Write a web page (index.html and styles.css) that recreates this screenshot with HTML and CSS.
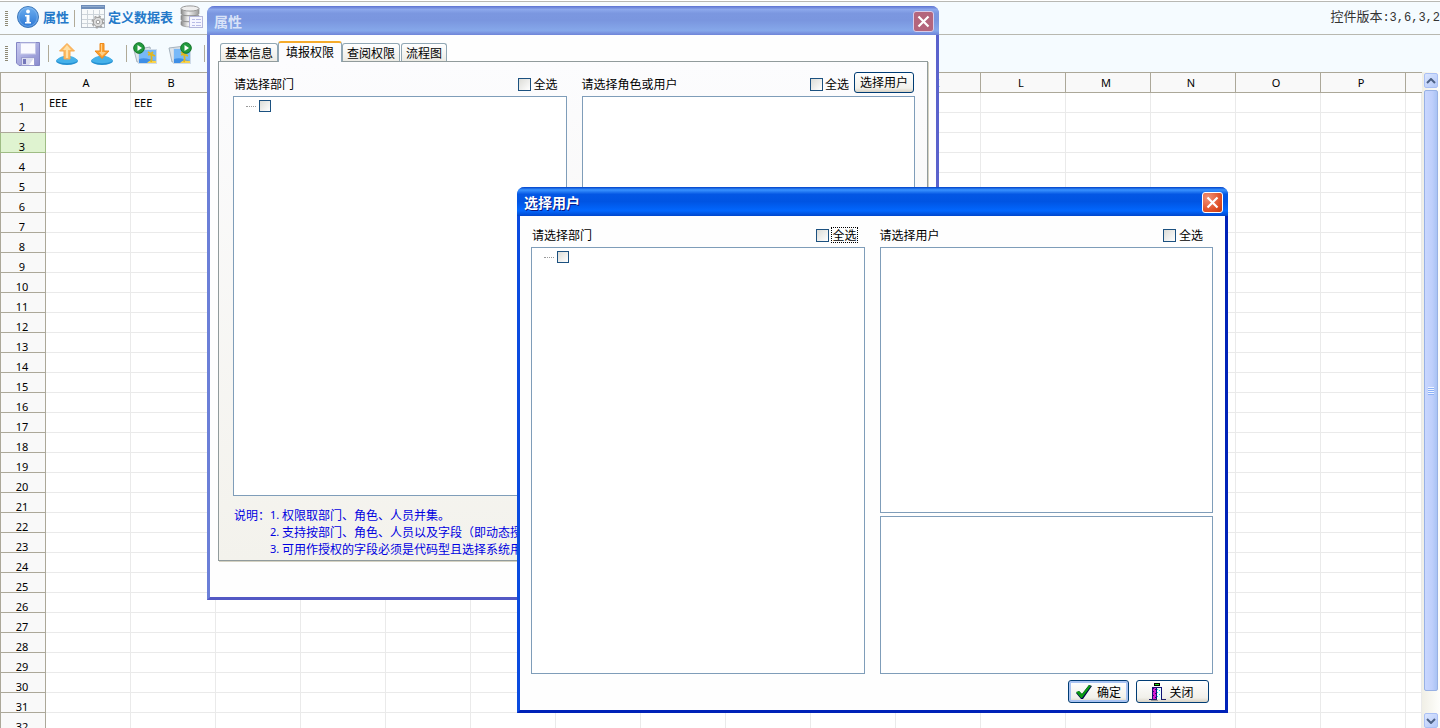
FILE: index.html
```html
<!DOCTYPE html>
<html lang="zh-CN">
<head>
<meta charset="utf-8">
<title>属性</title>
<link rel="stylesheet" href="styles.css">
</head>
<body>
<header class="toolbar toolbar-main">
  <span class="grip"></span>
  <button class="tool" type="button">
    <svg width="24" height="24" viewBox="0 0 24 24"><defs><linearGradient id="info" x1="0" y1="0" x2="0" y2="1"><stop offset="0" stop-color="#6fb0f0"/><stop offset="1" stop-color="#2a76d4"/></linearGradient></defs><circle cx="12" cy="12" r="10.5" fill="url(#info)" stroke="#3f78b8"/><circle cx="12" cy="12" r="9.3" fill="none" stroke="#8fc0f2" stroke-width=".6"/><circle cx="12" cy="6.500" r="1.900" fill="#fff"/><path d="M9 10h4.500v7H15v1.500H9V17h1.500v-5.500H9z" fill="#fff"/></svg>
    <span>属性</span>
  </button>
  <span class="sep"></span>
  <button class="tool" type="button">
    <svg width="24" height="24" viewBox="0 0 24 24"><rect x=".5" y=".5" width="23" height="22" fill="#f8fafb" stroke="#b4bcc6"/><path d="M0 0h24v4H0z" fill="#6d8cb8"/><path d="M1 1h22v1H1z" fill="#8fabd0"/><path d="M1 9.500h22M1 14.500h22M1 18.500h22M6.500 5v17M12.500 5v17M18.500 5v17" stroke="#cdd4da"/><circle cx="17" cy="17" r="4.700" fill="#dcdcdc" stroke="#999" stroke-width="1"/><circle cx="17" cy="17" r="5.700" fill="none" stroke="#a5a5a5" stroke-width="1.600" stroke-dasharray="2.200 2.270"/><circle cx="17" cy="17" r="1.800" fill="#fff" stroke="#999"/></svg>
    <span>定义数据表</span>
  </button>
  <button class="tool tool-data" type="button" aria-label="数据">
    <svg width="24" height="24" viewBox="0 0 24 24"><defs><linearGradient id="db"><stop offset="0" stop-color="#888"/><stop offset=".4" stop-color="#f4f4f4"/><stop offset="1" stop-color="#999"/></linearGradient></defs><path d="M1 3.500v5c0 3.200 18 3.200 18 0v-5zM1 10.500v4c0 3.200 18 3.200 18 0v-4zM1 16.500v3c0 3.200 18 3.200 18 0v-3z" fill="url(#db)" stroke="#888" stroke-width=".6"/><ellipse cx="10" cy="3.500" rx="9" ry="2.600" fill="#eee" stroke="#999"/><rect x="9.500" y="11.500" width="13" height="11" fill="#f5f6ff" stroke="#b3b6da"/><path d="M12 14.500h3m1 0h5m-9 3h3m1 0h5m-9 3h3m1 0h5" stroke="#b8bce6"/></svg>
  </button>
  <span class="version">控件版本<span class="digits">:3,6,3,2</span></span>
</header>
<nav class="toolbar toolbar-sub" aria-label="工具">
  <span class="grip"></span>
  <button class="tool" type="button" aria-label="保存">
    <svg width="24" height="24" viewBox="0 0 24 24"><defs><linearGradient id="disk" x1="0" y1="0" x2="1" y2="1"><stop offset="0" stop-color="#c9cbf0"/><stop offset="1" stop-color="#8a8ccf"/></linearGradient></defs><path d="M.500.500h23v23H3l-2.500-2.500z" fill="url(#disk)" stroke="#8486c4"/><rect x="4.500" y="1" width="15" height="11" fill="#fafaff" stroke="#c4c6e8"/><rect x="5.500" y="15.500" width="13" height="8" fill="#dcdef0" stroke="#9a9cd0"/><rect x="7" y="17" width="3" height="5" fill="#7476ba"/><path d="M13 23l5-7v7z" fill="#fff"/></svg>
  </button>
  <span class="sep"></span>
  <button class="tool" type="button" aria-label="上移">
    <svg width="24" height="24" viewBox="0 0 24 24"><ellipse cx="12" cy="19" rx="11" ry="4" fill="#2590d2"/><path d="M1.500 19C4 12 20 12 22.500 19c-5 3-16 3-21 0" fill="#45b1ea"/><path d="M12 1.500l7.500 7.500H15v8H9V9H4.500z" fill="#fdbb63" stroke="#f7a94e"/><path d="M12 3l4 5h-3v8h-2V8H8z" fill="#ffe0a6"/></svg>
  </button>
  <button class="tool" type="button" aria-label="下移">
    <svg width="24" height="24" viewBox="0 0 24 24"><ellipse cx="12" cy="19" rx="11" ry="4" fill="#2590d2"/><path d="M1.500 19C4 12 20 12 22.500 19c-5 3-16 3-21 0" fill="#45b1ea"/><path d="M10 1.500h4V9h5l-7 7.500L5 9h5z" fill="#fca02f" stroke="#ee8b1e"/><path d="M11 2h1v8h4l-4 4-3-4h2z" fill="#ffcf86"/></svg>
  </button>
  <span class="sep"></span>
  <button class="tool" type="button" aria-label="导入">
    <svg width="24" height="24" viewBox="0 0 24 24"><path d="M1 8l16-3 2 14-15 1z" fill="#dfe5ea" stroke="#a5b2be"/><rect x="5.500" y="7.500" width="18" height="14" fill="#78b9f8" stroke="#cfdbe8"/><path d="M6 17c5-2 11 0 17 2v2H6z" fill="#3f8fe6"/><path d="M14 21c2-3 6-3 9-2v2z" fill="#f9d34c"/><path d="M18 20c1-3 1-5 0-8m0 0l-3 1m3-1l4 2m-4-2l2-2m-2 2l-3-2" stroke="#e3b71c" stroke-width="1.800" fill="none"/><circle cx="6" cy="6" r="5.300" fill="#239b3e" stroke="#127528"/><path d="M4.500 3l4.500 3-4.500 3z" fill="#fff"/></svg>
  </button>
  <button class="tool" type="button" aria-label="导出">
    <svg width="24" height="24" viewBox="0 0 24 24"><path d="M1 6l16-2 2 15-15 1z" fill="#dfe5ea" stroke="#a5b2be"/><rect x="5.500" y="6.500" width="17" height="15" fill="#78b9f8" stroke="#cfdbe8"/><path d="M6 17c5-2 11 0 16 2v2H6z" fill="#3f8fe6"/><path d="M12 21c2-3 6-3 10-2v2z" fill="#f9d34c"/><path d="M16 20c1-3 1-5 0-8m0 0l-3 1m3-1l4 2m-4-2l-3-2" stroke="#e3b71c" stroke-width="1.800" fill="none"/><circle cx="18" cy="6" r="5.300" fill="#239b3e" stroke="#127528"/><path d="M16.500 3l4.500 3-4.500 3z" fill="#fff"/></svg>
  </button>
  <span class="sep"></span>
</nav>
<main class="sheet">
  <div class="sheet-view">
    <table class="grid" id="grid"></table>
  </div>
  <div class="scrollbar">
    <button class="scroll-btn" type="button" aria-label="向上滚动"><svg width="10" height="6" viewBox="0 0 10 6"><path d="M1 5l4-4 4 4" fill="none" stroke="#4d6185" stroke-width="2"/></svg></button>
    <div class="thumb"><span class="thumb-grip"></span></div>
    <button class="scroll-btn" type="button" aria-label="向下滚动"><svg width="10" height="6" viewBox="0 0 10 6"><path d="M1 1l4 4 4-4" fill="none" stroke="#4d6185" stroke-width="2"/></svg></button>
  </div>
</main>

<section class="window window-props" aria-label="属性">
  <div class="titlebar">
    <h2 class="title">属性</h2>
    <button class="close" type="button" aria-label="关闭"><svg width="13" height="13" viewBox="0 0 13 13"><path d="M1.500 1.500l10 10M11.500 1.500l-10 10" stroke="#fff" stroke-width="2.200"/></svg></button>
  </div>
  <div class="props-body">
    <div class="tabs" role="tablist">
      <button class="tab" role="tab" type="button">基本信息</button>
      <button class="tab tab-active" role="tab" type="button" aria-selected="true">填报权限</button>
      <button class="tab" role="tab" type="button">查阅权限</button>
      <button class="tab tab-last" role="tab" type="button">流程图</button>
    </div>
    <div class="panel">
      <div class="columns">
        <div class="column">
          <div class="column-head"><span class="caption">请选择部门</span><label class="check"><input type="checkbox"><span>全选</span></label></div>
          <div class="list list-props"><span class="branch"></span><input type="checkbox" aria-label="部门"></div>
        </div>
        <div class="column">
          <div class="column-head column-head-wide"><span class="caption">请选择角色或用户</span><label class="check"><input type="checkbox"><span>全选</span></label><button class="button button-pick" type="button">选择用户</button></div>
          <div class="list list-props"></div>
        </div>
      </div>
      <div class="notes">
        <span>说明：</span>
        <ol class="note-list">
          <li><span class="num">1.</span>权限取部门、角色、人员并集。</li>
          <li><span class="num">2.</span>支持按部门、角色、人员以及字段（即动态授</li>
          <li><span class="num">3.</span>可用作授权的字段必须是代码型且选择系统用</li>
        </ol>
      </div>
    </div>
  </div>
</section>

<section class="window window-users" aria-label="选择用户">
  <div class="titlebar">
    <h2 class="title">选择用户</h2>
    <button class="close" type="button" aria-label="关闭"><svg width="13" height="13" viewBox="0 0 13 13"><path d="M1.500 1.500l10 10M11.500 1.500l-10 10" stroke="#fff" stroke-width="2.200"/></svg></button>
  </div>
  <div class="users-body">
    <div class="columns">
      <div class="column">
        <div class="column-head"><span class="caption">请选择部门</span><label class="check"><input type="checkbox"><span class="focused">全选</span></label></div>
        <div class="list list-tall"><span class="branch"></span><input type="checkbox" aria-label="部门"></div>
      </div>
      <div class="column">
        <div class="column-head"><span class="caption">请选择用户</span><label class="check"><input type="checkbox"><span>全选</span></label></div>
        <div class="list list-users"></div>
        <div class="list list-picked"></div>
      </div>
    </div>
    <div class="actions">
      <button class="button button-ok" type="button"><svg width="16" height="16" viewBox="0 0 16 16"><path d="M0 9l3-2 3 3 7-9 3 1-9 13H5z" fill="#00004c"/><path d="M0 8l3-1 3 3 7-9 2 1-9 12H5z" fill="#0b9a12"/></svg>确定</button>
      <button class="button button-close" type="button"><svg width="18" height="18" viewBox="0 0 18 18" shape-rendering="crispEdges"><path d="M6 0h6v3H6z" fill="#000"/><path d="M7 1h4v1H7z" fill="#1be31b"/><path d="M4 4h4v12H4z" fill="#d31bd3"/><path d="M5 5h1v1H5zm2 1h1v1H7zM5 8h1v1H5zm2 2h1v1H7zm-2 2h1v1H5zm2 2h1v1H7z" fill="#400060"/><path d="M9 5h4v11H9z" fill="#eaffff"/><path d="M9 6h1v1H9zm2 1h1v1h-1zM9 9h1v1H9zm2 2h1v1h-1zm-2 2h1v1H9z" fill="#18c8dc"/><path d="M4 4h9v1H4zM4 4h1v12H4zM8 5h1v11H8zM13 4h1v13h-1z" fill="#111174"/><path d="M1 16h8v1H1zM13 16h5v1h-5z" fill="#222266"/><path d="M3 17h7v1H3z" fill="#999"/></svg>关闭</button>
    </div>
  </div>
</section>
<script src="app.js"></script>
</body>
</html>
```
FILE: styles.css
```css
* { box-sizing: border-box; }
body {
  margin: 0;
  height: 100vh;
  display: flex;
  flex-direction: column;
  overflow: hidden;
  position: relative;
  background: #fff;
  color: #000;
  font: 12px/16px "Noto Sans CJK SC", sans-serif;
}
button { margin: 0; font: inherit; color: inherit; }
svg { display: block; flex: none; }

/* toolbars */
.toolbar {
  display: flex;
  align-items: center;
  background: #f5fbff;
  padding-left: 5px;
  flex: none;
}
.toolbar-main {
  height: 34px;
  margin-top: 1px;
  border-top: 1px solid #b8b8b4;
  border-bottom: 1px solid #b8b8b0;
}
.toolbar-sub { height: 37px; }
.grip {
  width: 3px;
  height: 15px;
  margin-right: 8px;
  background: repeating-linear-gradient(#8e8a76 0 1px, transparent 1px 2px);
}
.tool {
  display: flex;
  align-items: center;
  gap: 3px;
  border: 0;
  padding: 0 0 2px;
  background: none;
  color: #2479c9;
  font-size: 13px;
  font-weight: bold;
}
.toolbar-sub .tool { padding: 0; }
.toolbar-main .sep { margin: 0 6px 0 5px; }
.sep { width: 1px; height: 17px; background: #b0aa98; }
.tool-data { margin-left: 7px; }
.toolbar-sub .sep { margin: 0 6px 0 8px; }
.toolbar-sub .tool + .tool { margin-left: 11px; }
.toolbar-sub .tool + .tool + .sep { margin-left: 12px; }
.version { margin-left: auto; padding-bottom: 2px; font-size: 13px; color: #333; }
.digits { font-family: "Liberation Mono", monospace; font-size: 12px; }

/* spreadsheet */
.sheet { flex: 1; min-height: 0; display: flex; }
.sheet-view { flex: 1; overflow: hidden; }
.grid {
  width: 100%;
  table-layout: fixed;
  border-collapse: separate;
  border-spacing: 0;
  border-top: 1px solid #aca899;
  font: 11px/14px "Noto Sans", sans-serif;
}
.grid th, .grid td {
  height: 20px;
  padding: 0 3px;
  border: 0 solid #eaeaea;
  border-width: 0 1px 1px 0;
  font-weight: normal;
  text-align: left;
}
.grid th {
  background: #f9f9f9;
  border-color: #aca899;
  text-align: center;
  padding: 0 4px 0 0;
}
.grid thead th:last-child { border-right-width: 0; }
.grid tbody th { border-left-width: 1px; padding: 8px 2px 0 0; line-height: 11px; }
.grid .corner { width: 46px; border-left-width: 1px; }
.grid .col { width: 85px; }
.grid tbody .current { background: #dff3d0; border-color: #9fbc84; }
.scrollbar {
  width: 18px;
  padding: 1px 2px 0;
  display: flex;
  flex-direction: column;
  background: linear-gradient(90deg, #f0efe6, #fefefb);
}
.scroll-btn {
  height: 15px;
  padding: 0;
  display: flex;
  align-items: center;
  justify-content: center;
  border: 1px solid #aac0f5;
  border-radius: 2px;
  background: linear-gradient(135deg, #dbe6ff, #b4c8f8);
}
.thumb {
  flex: 1;
  margin: 2px 0 22px;
  display: flex;
  align-items: center;
  justify-content: center;
  border: 1px solid #98b1e4;
  border-radius: 2px;
  background: linear-gradient(90deg, #c9d7ff, #bfcffb 60%, #a9c3f4);
}
.thumb-grip { width: 6px; height: 8px; background: repeating-linear-gradient(#eef4ff 0 1px, #8cb0f8 1px 2px); }

/* windows */
.window {
  position: absolute;
  border: 3px solid;
  border-top: 0;
  border-radius: 8px 8px 0 0;
  background: #fefefe;
}
.titlebar {
  height: 29px;
  margin: 0 -3px;
  padding: 1px 5px 0 7px;
  display: flex;
  align-items: center;
  justify-content: space-between;
  border-radius: 7px 7px 0 0;
  color: #fff;
}
.title { margin: 0; font-size: 14px; line-height: 20px; padding-bottom: 1px; }
.close {
  width: 21px;
  height: 21px;
  padding: 0;
  display: flex;
  align-items: center;
  justify-content: center;
  border: 1px solid #fff;
  border-radius: 3px;
  background: radial-gradient(circle at 25% 25%, #f09278, #df4f26 65%, #c23a10);
}
.window-props { left: 207px; top: 6px; width: 732px; border-color: #6b7fd8 #5a62cc #5358c4 #6b7fd8; }
.window-props .titlebar { background: linear-gradient(#5b72d2, #8ca8ec 12%, #7b97e0 25%, #7a96df 50%, #86a8ea 85%, #6f84d8); color: #d8e2f8; }
.window-props .close { background: #b4657c; border-color: #d9cce8; }
.window-users { left: 517px; top: 187px; width: 711px; border-color: #0a4be0 #0022b8 #0022b8 #0a4be0; }
.window-users .titlebar { background: linear-gradient(#0041c8, #3a93ff 10%, #0457e4 25%, #0054e3 50%, #0267fe 82%, #0046cc); }
.window-users .title { text-shadow: 1px 1px 0 #0a1883; }

.props-body { padding: 6px 8px 36px; }
.tabs { display: flex; align-items: flex-end; height: 20px; padding-left: 2px; }
.tab {
  height: 18px;
  padding: 0 4px;
  line-height: 16px;
  border: 1px solid #91a7b4;
  border-bottom: 0;
  border-radius: 3px 3px 0 0;
  background: linear-gradient(#fff, #ecebe5);
}
.tab-active {
  height: 21px;
  padding: 0 7px 2px;
  border-top: 2px solid #f5ab2c;
  background: #fcfcfe;
  margin-bottom: -1px;
  position: relative;
  z-index: 1;
}
.tab-last { margin-left: 1px; }
.panel {
  padding: 10px 12px 3px 14px;
  border: 1px solid #919b9c;
  box-shadow: 1px 1px 0 #d5d2c2;
  background: linear-gradient(#fcfcfe, #f3f2ec);
}
.columns { display: grid; grid-template-columns: 1fr 1fr; column-gap: 15px; }
.column-head { display: flex; align-items: center; height: 24px; padding: 0 9px 0 1px; }
.column-head-wide { padding: 0 1px 0 0; }
.caption { margin-right: auto; }
.check { display: flex; align-items: center; gap: 2px; }
.column-head-wide .check { margin-right: 5px; }
.window-users .column-head { padding: 0 10px 0 1px; }
.window-users .column + .column .column-head { padding-left: 0; }
.window-users .check { gap: 3px; }
.window-users .focused { margin-right: -2px; }
input[type="checkbox"] {
  appearance: none;
  width: 13px;
  height: 13px;
  margin: 0;
  flex: none;
  border: 1px solid #1c5180;
  background: linear-gradient(135deg, #dcdcd7, #fff);
}
.focused { outline: 1px dotted #000; line-height: 14px; }
.list { display: flex; align-items: flex-start; border: 1px solid #7f9db9; background: #fff; padding: 3px 12px; }
.list input[type="checkbox"] { width: 12px; height: 12px; }
.branch { width: 10px; margin: 6px 3px 0 0; border-top: 1px dotted #999; }
.list-props { height: 400px; }
.list-tall { height: 427px; }
.list-users { height: 266px; margin-bottom: 3px; }
.list-picked { height: 158px; }
.notes { display: flex; padding: 10px 0 0 1px; color: #0000e0; line-height: 17px; white-space: nowrap; }
.note-list { margin: 0; padding: 0; list-style: none; }
.note-list li { display: flex; }
.num { width: 12px; font: 11px/17px "Noto Sans", sans-serif; }
.button {
  display: flex;
  align-items: center;
  justify-content: center;
  padding: 0;
  border: 1px solid #003c74;
  border-radius: 3px;
  background: linear-gradient(#fff, #f1f0ea 80%, #d8d2c4);
}
.button-pick { width: 60px; height: 21px; margin-bottom: 4px; }
.users-body { padding: 7px 12px 7px 11px; }
.actions { display: flex; justify-content: flex-end; gap: 7px; padding: 6px 4px 0 0; }
.button-ok { width: 61px; height: 23px; gap: 5px; box-shadow: inset 0 0 0 2px #a9c3f2; }
.button-close { width: 73px; height: 23px; padding-right: 3px; gap: 3px; }
```
FILE: app.js
```js
const columns = "ABCDEFGHIJKLMNOP".split("");
const grid = document.getElementById("grid");
const cells = { 1: { A: "EEE", B: "EEE" } };
const currentRow = 3;

const head = columns.map((name) => `<th class="col" scope="col">${name}</th>`).join("");
let rows = "";
for (let r = 1; r <= 32; r++) {
  const values = columns.map((name) => `<td>${(cells[r] && cells[r][name]) || ""}</td>`).join("");
  rows += `<tr><th scope="row"${r === currentRow ? ' class="current"' : ""}>${r}</th>${values}<td></td></tr>`;
}
grid.innerHTML = `<thead><tr><th class="corner"></th>${head}<th></th></tr></thead><tbody>${rows}</tbody>`;
```
